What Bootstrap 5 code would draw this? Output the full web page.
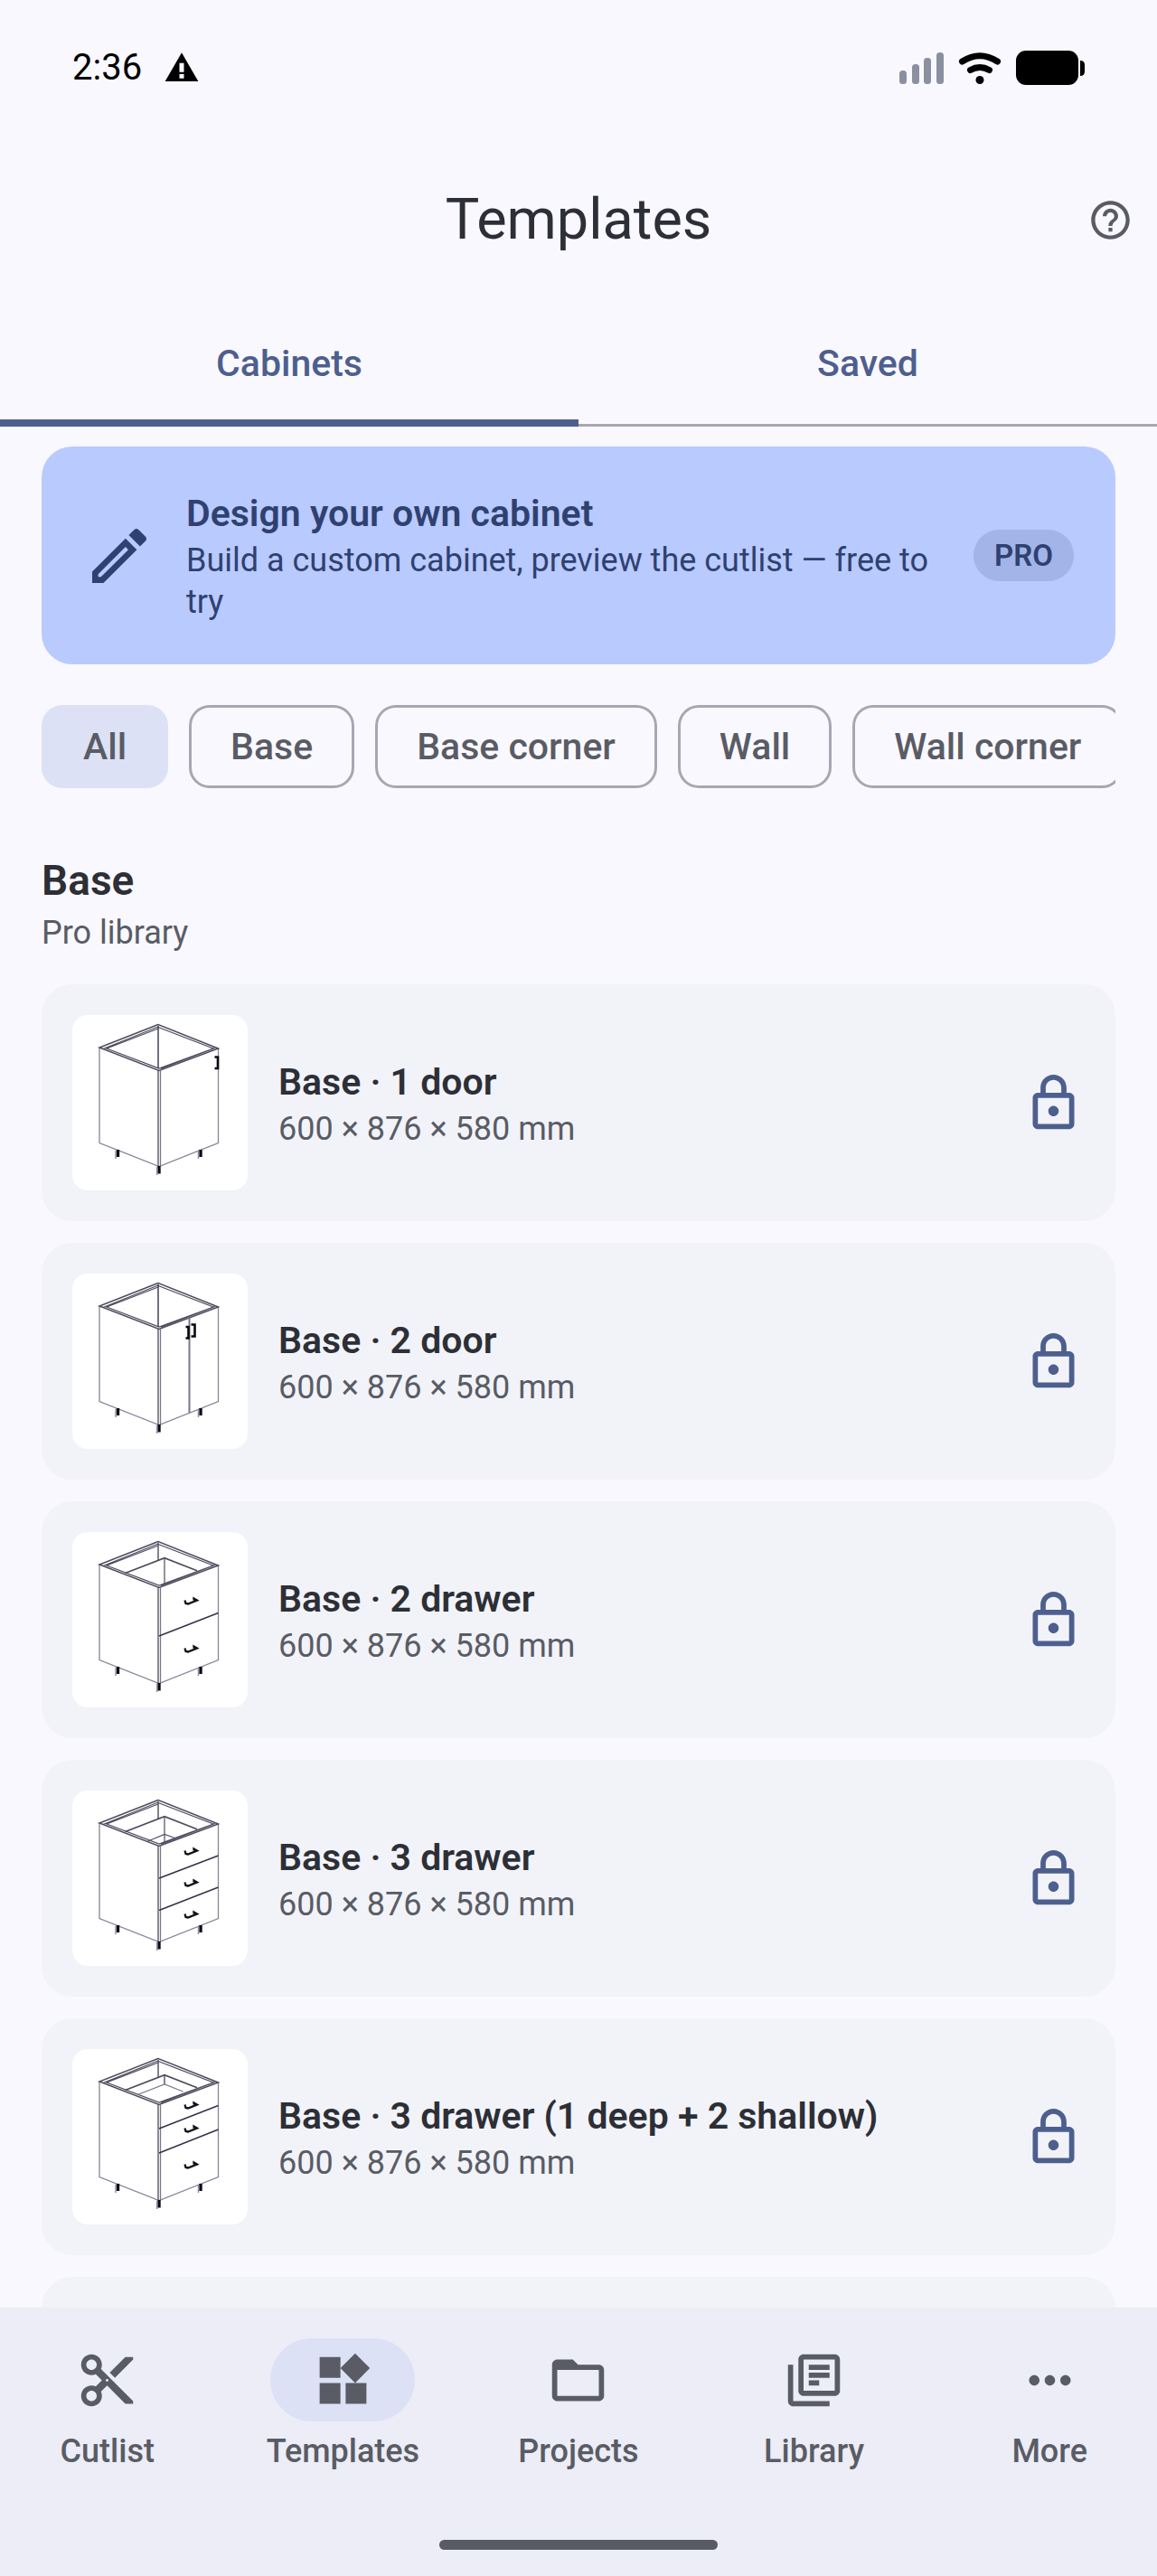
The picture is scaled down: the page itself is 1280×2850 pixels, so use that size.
<!DOCTYPE html>
<html lang="en">
<head>
<meta charset="utf-8">
<meta name="viewport" content="width=device-width, initial-scale=1">
<title>Templates</title>
<link href="https://cdn.jsdelivr.net/npm/bootstrap@5.3.0/dist/css/bootstrap.min.css" rel="stylesheet">
<style>
  :root {
    --ink: #2d2f36; --muted: #595c65; --accent: #4d5f8e; --navy: #2f4170;
    --soft: #dce1f5; --line: #a6a8b1; --page: #faf8ff; --panel: #f2f3f9; --bar: #ecedf6;
  }
  body { font-family: Roboto, "Liberation Sans", sans-serif; background: var(--page); color: var(--ink); }
  svg { display: block; flex: none; fill: currentColor; }
  a { color: inherit; text-decoration: none; }
  .status-bar { height: 150px; padding: 0 80px; font-size: 40px; line-height: 46px; color: #000; }
  .app-bar { height: 186px; padding: 0 26px; }
  .app-title { font-size: 63px; line-height: 80px; font-weight: 400; }
  .side-slot { width: 51px; }
  .help-btn { color: var(--muted); border: 0; padding: 0; }
  .tab-strip { border-bottom: 3px solid var(--line); }
  .tab-btn { height: 136px; margin-bottom: -3px; border: 0; border-bottom: 8px solid transparent; background: none;
    color: var(--accent); font-size: 41px; line-height: 57px; font-weight: 500; padding: 4px 0 0; }
  .tab-btn.active { border-bottom-color: var(--accent); }
  .scroller { overflow-y: auto; scrollbar-width: none; padding: 22px 46px 0; }
  .scroller::-webkit-scrollbar, .chip-row::-webkit-scrollbar { display: none; }
  .promo { background: #b9caff; color: var(--navy); border-radius: 34px; padding: 46px; gap: 34px; }
  .item-title { font-size: 41px; line-height: 57px; font-weight: 600; }
  .item-note { font-size: 36px; line-height: 46px; font-weight: 400; }
  .promo .item-note { margin-right: -12px; }
  .pill { background: #a3b4e8; border-radius: 29px; font-size: 33px; line-height: 57px; font-weight: 600; padding: 0 23px; }
  .chip-row { gap: 23px; margin-top: 45px; overflow-x: auto; scrollbar-width: none; }
  .chip { flex: none; height: 92px; border: 3px solid var(--line); border-radius: 23px; padding: 0 43px; background: none;
    color: var(--muted); font-size: 41px; line-height: 57px; font-weight: 500; }
  .chip.active { background: var(--soft); border-color: var(--soft); }
  .group-title { font-size: 46px; line-height: 69px; font-weight: 600; margin: 68px 0 0; }
  .group-note { margin-bottom: 34px; }
  .muted { color: var(--muted); }
  .tpl-list { gap: 23px; }
  .tpl { background: var(--panel); color: var(--ink); border-radius: 34px; padding: 34px; gap: 34px; min-height: 262px; }
  .thumb { background: #fff; border-radius: 17px; width: 194px; height: 194px; color: #4c4c5e; }
  .lock { color: var(--accent); }
  .bottom-bar { background: var(--bar); color: var(--muted); padding: 34px 0 29px; }
  .dest-row { gap: 23px; height: 223px; }
  .dest { font-size: 36px; line-height: 46px; font-weight: 500; flex: 1 1 0; }
  .dest-icon { width: 160px; height: 92px; border-radius: 46px; margin-bottom: 10px; }
  .dest.active .dest-icon { background: var(--soft); }
  .home-bar { width: 308px; height: 11px; border-radius: 6px; background: #585b66; }
  .tpl + .tpl { margin-top: 1px; }
</style>
<script src="https://cdn.jsdelivr.net/npm/bootstrap@5.3.0/dist/js/bootstrap.bundle.min.js"></script>
</head>
<body>
<svg width="0" height="0" class="position-absolute" aria-hidden="true">
  <defs>
    <g id="carcass" fill="none" stroke="#4c4c5e">
      <path stroke="#85859a" stroke-width="1.3" d="M30 36V141.500L96 167.500L161.500 141.500V37"/>
      <path stroke-width="1.500" d="M95 10.500L30 36L96 61.500L161.500 37Z"/>
      <path stroke-width="1.200" d="M95 15L38 37L96 59L156 37L95 13.500M34 37.500L95 13M98 59.500L158 36.500"/>
      <path stroke-width="1.300" d="M95 61V167"/>
      <path stroke-width="1.300" stroke="#77778a" d="M97.500 61V167"/>
      <path stroke="#0b0b14" stroke-width="3.400" d="M50.500 149V157M142 149V157M96 167V175.500"/>
      <path stroke="#8c8ca6" stroke-width="1.500" d="M48 150V159M139.500 150V159M93.700 168V177"/>
    </g>
    <path id="back-long" fill="none" stroke="#33334a" stroke-width="1.400" d="M95 12V59"/>
    <g id="drawer-box" fill="none" stroke="#4c4c5e">
      <path d="M95 12V31" stroke-width="1.400"/>
      <path stroke-width="1.700" d="M58.500 45.500L102 28.700L138 42.700"/>
      <path stroke-width="1.200" d="M102 29V57"/>
    </g>
    <path id="pull" fill="none" stroke="#11111a" stroke-width="2.300" d="M124.500 75.500L125.500 79L128 79.500L138 75.500L134.500 73.500V75.500"/>
    <path id="bar-pull" fill="none" stroke="#080810" stroke-width="2.600" d="M157.500 46.500H161V59H157.500"/>
    <path id="lock-shape" d="M18 8h-1V6c0-2.760-2.240-5-5-5S7 3.240 7 6v2H6c-1.100 0-2 .9-2 2v10c0 1.100.9 2 2 2h12c1.100 0 2-.9 2-2V10c0-1.100-.9-2-2-2zM9 6c0-1.660 1.340-3 3-3s3 1.340 3 3v2H9V6zm9 14H6V10h12v10zm-6-3c1.100 0 2-.9 2-2s-.9-2-2-2-2 .9-2 2 .9 2 2 2z"/>
  </defs>
</svg>

<div class="d-flex flex-column vh-100 overflow-hidden">
  <div class="status-bar d-flex align-items-center flex-shrink-0">
    <span>2:36</span>
    <svg class="ms-4" width="40" height="40" viewBox="0 0 24 24" role="img" aria-label="Warning"><path d="M1 21h22L12 2 1 21zm12.500-2h-3v-2.800h3v2.800zm0-4.200h-3v-6h3v6z"/></svg>
    <svg class="ms-auto" width="205" height="40" viewBox="0 0 205 40" role="img" aria-label="Signal, Wi-Fi and battery">
      <g fill="#8b90a0"><rect y="23" width="8" height="15" rx="3.500"/><rect x="14" y="16" width="8" height="22" rx="3.500"/><rect x="27" y="9" width="8" height="29" rx="3.500"/><rect x="41" y="3" width="8" height="35" rx="3.500"/></g>
      <g fill="none" stroke="#000" stroke-width="7" stroke-linecap="round"><path d="M69.500 13Q89 .5 108.500 13"/><path d="M78.500 22.500Q89 16.500 99.500 22.500"/></g>
      <circle cx="89" cy="33.500" r="4.500"/>
      <rect x="129" y="1" width="69" height="38" rx="11"/>
      <path d="M200 12q5 0 5 5v7q0 5-5 5z"/>
    </svg>
  </div>

  <header class="app-bar d-flex align-items-center justify-content-between flex-shrink-0">
    <span class="side-slot"></span>
    <h1 class="app-title mb-0">Templates</h1>
    <button type="button" class="help-btn bg-transparent" aria-label="Help">
      <svg width="51" height="51" viewBox="0 0 24 24"><path d="M11 18h2v-2h-2v2zm1-16C6.480 2 2 6.480 2 12s4.480 10 10 10 10-4.480 10-10S17.520 2 12 2zm0 18c-4.410 0-8-3.590-8-8s3.590-8 8-8 8 3.590 8 8-3.590 8-8 8zm0-14c-2.210 0-4 1.790-4 4h2c0-1.100.9-2 2-2s2 .9 2 2c0 2-3 1.750-3 5h2c0-2.250 3-2.500 3-5 0-2.210-1.790-4-4-4z"/></svg>
    </button>
  </header>

  <div class="tab-strip d-flex flex-shrink-0" role="tablist">
    <button type="button" class="tab-btn active flex-fill w-50" role="tab" aria-selected="true">Cabinets</button>
    <button type="button" class="tab-btn flex-fill w-50" role="tab" aria-selected="false">Saved</button>
  </div>

  <main class="scroller flex-fill">
    <a href="#design" class="promo d-flex align-items-center">
      <svg width="80" height="80" viewBox="0 0 24 24" aria-hidden="true"><path d="M14.060 9.020l.92.92L5.920 19H5v-.92l9.060-9.060M17.660 3c-.25 0-.51.1-.7.290l-1.830 1.830 3.750 3.750 1.830-1.830c.39-.39.39-1.020 0-1.410l-2.340-2.340c-.2-.2-.45-.29-.71-.29zm-3.600 3.190L3 17.250V21h3.750L17.810 9.940l-3.750-3.750z"/></svg>
      <span class="flex-fill">
        <span class="item-title d-block">Design your own cabinet</span>
        <span class="item-note d-block">Build a custom cabinet, preview the cutlist — free to try</span>
      </span>
      <span class="pill">PRO</span>
    </a>

    <div class="chip-row d-flex">
      <button type="button" class="chip active" aria-pressed="true">All</button>
      <button type="button" class="chip">Base</button>
      <button type="button" class="chip">Base corner</button>
      <button type="button" class="chip">Wall</button>
      <button type="button" class="chip">Wall corner</button>
    </div>

    <h2 class="group-title">Base</h2>
    <p class="group-note item-note muted">Pro library</p>

    <div class="tpl-list d-flex flex-column">
      <a href="#base-1-door" class="tpl d-flex align-items-center">
        <svg class="thumb" viewBox="0 0 194 194" aria-hidden="true"><use href="#carcass"/><use href="#back-long"/><use href="#bar-pull"/></svg>
        <span class="flex-fill"><span class="item-title d-block">Base · 1 door</span><span class="item-note muted d-block">600 × 876 × 580 mm</span></span>
        <svg class="lock" width="69" height="69" viewBox="0 0 24 24" role="img" aria-label="Locked"><use href="#lock-shape"/></svg>
      </a>
      <a href="#base-2-door" class="tpl d-flex align-items-center">
        <svg class="thumb" viewBox="0 0 194 194" aria-hidden="true"><use href="#carcass"/><use href="#back-long"/>
          <path fill="none" stroke="#77778a" stroke-width="2" d="M129.500 49V154"/>
          <path fill="none" stroke="#080810" stroke-width="2.600" d="M125.500 59H128.500V71.500H125.500M131.500 56.500H135.500V69.500H131.500"/></svg>
        <span class="flex-fill"><span class="item-title d-block">Base · 2 door</span><span class="item-note muted d-block">600 × 876 × 580 mm</span></span>
        <svg class="lock" width="69" height="69" viewBox="0 0 24 24" role="img" aria-label="Locked"><use href="#lock-shape"/></svg>
      </a>
      <a href="#base-2-drawer" class="tpl d-flex align-items-center">
        <svg class="thumb" viewBox="0 0 194 194" aria-hidden="true"><use href="#carcass"/><use href="#drawer-box"/>
          <path fill="none" stroke="#33334a" stroke-width="1.500" d="M96 115L161.500 89.500"/>
          <use href="#pull"/><use href="#pull" y="53"/></svg>
        <span class="flex-fill"><span class="item-title d-block">Base · 2 drawer</span><span class="item-note muted d-block">600 × 876 × 580 mm</span></span>
        <svg class="lock" width="69" height="69" viewBox="0 0 24 24" role="img" aria-label="Locked"><use href="#lock-shape"/></svg>
      </a>
      <a href="#base-3-drawer" class="tpl d-flex align-items-center">
        <svg class="thumb" viewBox="0 0 194 194" aria-hidden="true"><use href="#carcass"/><use href="#drawer-box"/>
          <path fill="none" stroke="#55556a" stroke-width="1.200" d="M83.500 56L102 48.500L113.500 52.500"/>
          <path fill="none" stroke="#33334a" stroke-width="1.500" d="M96 97L161.500 72M96 132.500L161.500 107"/>
          <use href="#pull" y="-9"/><use href="#pull" y="26"/><use href="#pull" y="61"/></svg>
        <span class="flex-fill"><span class="item-title d-block">Base · 3 drawer</span><span class="item-note muted d-block">600 × 876 × 580 mm</span></span>
        <svg class="lock" width="69" height="69" viewBox="0 0 24 24" role="img" aria-label="Locked"><use href="#lock-shape"/></svg>
      </a>
      <a href="#base-3-drawer-deep" class="tpl d-flex align-items-center">
        <svg class="thumb" viewBox="0 0 194 194" aria-hidden="true"><use href="#carcass"/><path fill="none" stroke="#4c4c5e" stroke-width="1.400" d="M95 12V31M102 29V39"/>
          <path fill="none" stroke="#4c4c5e" stroke-width="1.700" d="M58.500 45.500L102 28.700L138 42.700"/>
          <path fill="none" stroke="#77778a" stroke-width="1.200" d="M73.500 50L102 39L122.500 47"/>
          <path fill="none" stroke="#33334a" stroke-width="1.500" d="M96 88L161.500 62.500M96 115L161.500 89"/>
          <use href="#pull" y="-14"/><use href="#pull" y="12"/><use href="#pull" y="52"/></svg>
        <span class="flex-fill"><span class="item-title d-block">Base · 3 drawer (1 deep + 2 shallow)</span><span class="item-note muted d-block">600 × 876 × 580 mm</span></span>
        <svg class="lock" width="69" height="69" viewBox="0 0 24 24" role="img" aria-label="Locked"><use href="#lock-shape"/></svg>
      </a>
      <div class="tpl d-flex align-items-center" aria-hidden="true">
        <svg class="thumb" viewBox="0 0 194 194"><use href="#carcass"/></svg>
      </div>
    </div>
  </main>

  <nav class="bottom-bar flex-shrink-0" aria-label="Main">
    <div class="dest-row d-flex">
      <a href="#cutlist" class="dest d-flex flex-column align-items-center">
        <span class="dest-icon d-flex align-items-center justify-content-center"><svg width="69" height="69" viewBox="0 0 24 24" aria-hidden="true"><path d="M9.640 7.640c.23-.5.36-1.050.36-1.640 0-2.210-1.790-4-4-4S2 3.790 2 6s1.790 4 4 4c.59 0 1.140-.13 1.640-.36L10 12l-2.360 2.360C7.140 14.130 6.590 14 6 14c-2.210 0-4 1.790-4 4s1.790 4 4 4 4-1.790 4-4c0-.59-.13-1.140-.36-1.640L12 14l7 7h3v-1L9.640 7.640zM6 8c-1.100 0-2-.89-2-2s.9-2 2-2 2 .89 2 2-.9 2-2 2zm0 12c-1.100 0-2-.89-2-2s.9-2 2-2 2 .89 2 2-.9 2-2 2zm6-7.500c-.28 0-.5-.22-.5-.5s.22-.5.5-.5.5.22.5.5-.22.5-.5.5zM19 3l-6 6 2 2 7-7V3z"/></svg></span>
        Cutlist
      </a>
      <a href="#templates" class="dest active d-flex flex-column align-items-center" aria-current="page">
        <span class="dest-icon d-flex align-items-center justify-content-center"><svg width="69" height="69" viewBox="0 0 24 24" aria-hidden="true"><path d="M13 13v8h8v-8h-8zM3 21h8v-8H3v8zM3 3v8h8V3H3zm13.660-1.310L11 7.340 16.660 13l5.660-5.660-5.660-5.650z"/></svg></span>
        Templates
      </a>
      <a href="#projects" class="dest d-flex flex-column align-items-center">
        <span class="dest-icon d-flex align-items-center justify-content-center"><svg width="69" height="69" viewBox="0 0 24 24" aria-hidden="true"><path d="M20 6h-8l-2-2H4c-1.100 0-1.990.9-1.990 2L2 18c0 1.100.9 2 2 2h16c1.100 0 2-.9 2-2V8c0-1.100-.9-2-2-2zm0 12H4V8h16v10z"/></svg></span>
        Projects
      </a>
      <a href="#library" class="dest d-flex flex-column align-items-center">
        <span class="dest-icon d-flex align-items-center justify-content-center"><svg width="69" height="69" viewBox="0 0 24 24" aria-hidden="true"><path d="M4 6H2v14c0 1.100.9 2 2 2h14v-2H4V6zm16-4H8c-1.100 0-2 .9-2 2v12c0 1.100.9 2 2 2h12c1.100 0 2-.9 2-2V4c0-1.100-.9-2-2-2zm0 14H8V4h12v12zM10 9h8v2h-8zm0 3h4v2h-4zm0-6h8v2h-8z"/></svg></span>
        Library
      </a>
      <a href="#more" class="dest d-flex flex-column align-items-center">
        <span class="dest-icon d-flex align-items-center justify-content-center"><svg width="69" height="69" viewBox="0 0 24 24" aria-hidden="true"><path d="M6 10c-1.100 0-2 .9-2 2s.9 2 2 2 2-.9 2-2-.9-2-2-2zm12 0c-1.100 0-2 .9-2 2s.9 2 2 2 2-.9 2-2-.9-2-2-2zm-6 0c-1.100 0-2 .9-2 2s.9 2 2 2 2-.9 2-2-.9-2-2-2z"/></svg></span>
        More
      </a>
    </div>
    <div class="home-bar mx-auto"></div>
  </nav>
</div>
</body>
</html>
